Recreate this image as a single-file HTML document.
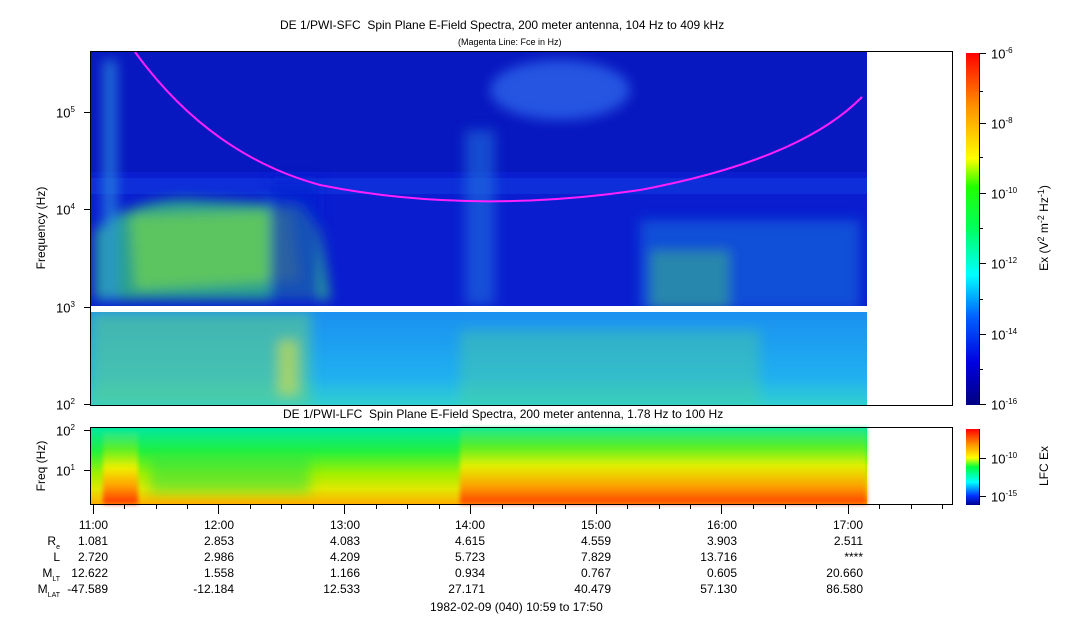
<!DOCTYPE html>
<html><head><meta charset="utf-8"><style>
body{margin:0;background:#fff;width:1083px;height:620px;overflow:hidden;position:relative;font-family:"Liberation Sans",sans-serif;color:#000}
.t{position:absolute;font-size:12px;white-space:nowrap;line-height:14px}
.c{position:absolute;font-size:12px;white-space:nowrap;line-height:16px;text-align:right}
.c div{height:16px}
sup{font-size:8px}
.s{font-size:7px;position:relative;top:4px}
</style></head><body>
<svg width="1083" height="620" style="position:absolute;left:0;top:0">
<defs>
<linearGradient id="cb" x1="0" y1="1" x2="0" y2="0">
<stop offset="0" stop-color="#000080"/><stop offset=".12" stop-color="#0000e0"/><stop offset=".25" stop-color="#0060ff"/><stop offset=".37" stop-color="#00ffff"/><stop offset=".5" stop-color="#00ff60"/><stop offset=".62" stop-color="#20ff00"/><stop offset=".7" stop-color="#ffff00"/><stop offset=".85" stop-color="#ff9000"/><stop offset="1" stop-color="#ff0000"/>
</linearGradient>
<linearGradient id="cb2" x1="0" y1="1" x2="0" y2="0">
<stop offset="0" stop-color="#000090"/><stop offset=".12" stop-color="#0030ff"/><stop offset=".3" stop-color="#00ffff"/><stop offset=".5" stop-color="#00ff40"/><stop offset=".62" stop-color="#ffff00"/><stop offset=".8" stop-color="#ff9000"/><stop offset="1" stop-color="#ff0000"/>
</linearGradient>
<linearGradient id="low" x1="0" y1="0" x2="0" y2="1">
<stop offset="0" stop-color="#00e8a0"/><stop offset=".3" stop-color="#20f040"/><stop offset=".6" stop-color="#a0f000"/><stop offset=".8" stop-color="#e0e800"/><stop offset="1" stop-color="#ffb000"/>
</linearGradient>
<linearGradient id="low2" x1="0" y1="0" x2="0" y2="1">
<stop offset="0" stop-color="#20e890"/><stop offset=".25" stop-color="#60f020"/><stop offset=".5" stop-color="#f0f000"/><stop offset=".75" stop-color="#ffa000"/><stop offset="1" stop-color="#ff3000"/>
</linearGradient>
<linearGradient id="band" x1="0" y1="0" x2="0" y2="1">
<stop offset="0" stop-color="#1a90f0"/><stop offset=".7" stop-color="#20b0f0"/><stop offset="1" stop-color="#30d0d0"/>
</linearGradient>
<filter id="bl" x="-20%" y="-20%" width="140%" height="140%"><feGaussianBlur stdDeviation="6"/></filter>
<filter id="bl2"><feGaussianBlur stdDeviation="2"/></filter>
<clipPath id="cp1"><rect x="91" y="52" width="776" height="254"/></clipPath>
<clipPath id="cp2"><rect x="91" y="312" width="776" height="93"/></clipPath>
</defs>
<rect x="91" y="52" width="776" height="254" fill="#0a1ed0"/>
<g clip-path="url(#cp1)">
<rect x="91" y="52" width="776" height="120" fill="#0818c0"/>
<ellipse cx="560" cy="90" rx="70" ry="30" fill="#3070f0" opacity=".7" filter="url(#bl)"/>
<rect x="91" y="178" width="776" height="16" fill="#1038e0" opacity=".6"/>
<g filter="url(#bl)">
<path d="M95 230 Q140 195 200 200 L300 205 L320 230 L330 300 L95 300Z" fill="#30c080" opacity=".8"/>
<path d="M130 215 L290 210 L300 280 L135 290Z" fill="#80e040" opacity=".6"/>
<rect x="103" y="60" width="14" height="240" fill="#2a90e0" opacity=".7"/>
<rect x="465" y="130" width="30" height="175" fill="#2080e0" opacity=".5"/>
<rect x="640" y="220" width="220" height="90" fill="#1a80e0" opacity=".5"/>
<rect x="650" y="250" width="80" height="60" fill="#40c080" opacity=".5"/>
<rect x="270" y="180" width="50" height="120" fill="#0a1ed0" opacity=".6"/>
</g>
</g>
<rect x="91" y="312" width="776" height="93" fill="url(#band)"/>
<g clip-path="url(#cp2)" filter="url(#bl)">
<rect x="91" y="312" width="220" height="93" fill="#60d080" opacity=".55"/>
<rect x="460" y="330" width="300" height="75" fill="#50d090" opacity=".4"/>
<rect x="278" y="340" width="20" height="55" fill="#e0e040" opacity=".6"/>
</g>
<path d="M135 52 Q210 155 320 185 Q470 215 640 190 Q800 160 862 97" fill="none" stroke="#ff20ff" stroke-width="2"/>
<rect x="90.5" y="51.5" width="862" height="354" fill="none" stroke="#000"/>
<rect x="91" y="428" width="776" height="76" fill="url(#low)"/>
<rect x="460" y="428" width="407" height="76" fill="url(#low2)" opacity=".9" filter="url(#bl2)"/>
<rect x="103" y="432" width="35" height="72" fill="url(#low2)" filter="url(#bl2)"/>
<rect x="150" y="455" width="160" height="38" fill="#20e050" opacity=".5" filter="url(#bl)"/>
<rect x="90.5" y="427.5" width="862" height="77" fill="none" stroke="#000"/>
<rect x="966" y="53" width="13" height="352" fill="url(#cb)"/>
<rect x="966" y="429" width="13" height="76" fill="url(#cb2)"/>
<g stroke="#000">
<line x1="979.5" y1="53" x2="979.5" y2="405"/>
<line x1="979" y1="53.5" x2="986" y2="53.5"/><line x1="979" y1="91.5" x2="983" y2="91.5"/>
<line x1="979" y1="123.5" x2="986" y2="123.5"/><line x1="979" y1="157.5" x2="983" y2="157.5"/>
<line x1="979" y1="193.5" x2="986" y2="193.5"/><line x1="979" y1="228.5" x2="983" y2="228.5"/>
<line x1="979" y1="263.5" x2="986" y2="263.5"/><line x1="979" y1="299.5" x2="983" y2="299.5"/>
<line x1="979" y1="334.5" x2="986" y2="334.5"/><line x1="979" y1="369.5" x2="983" y2="369.5"/>
<line x1="979" y1="404.5" x2="986" y2="404.5"/>
<line x1="979.5" y1="429" x2="979.5" y2="505"/>
<line x1="979" y1="458.5" x2="986" y2="458.5"/><line x1="979" y1="496.5" x2="986" y2="496.5"/>
<line x1="84" y1="112.5" x2="90" y2="112.5"/><line x1="84" y1="209.5" x2="90" y2="209.5"/>
<line x1="84" y1="307.5" x2="90" y2="307.5"/><line x1="84" y1="404.5" x2="90" y2="404.5"/>
<line x1="84" y1="430.5" x2="90" y2="430.5"/><line x1="84" y1="470.5" x2="90" y2="470.5"/>
<line x1="93.5" y1="505" x2="93.5" y2="514"/><line x1="218.5" y1="505" x2="218.5" y2="514"/>
<line x1="344.5" y1="505" x2="344.5" y2="514"/><line x1="470.5" y1="505" x2="470.5" y2="514"/>
<line x1="596.5" y1="505" x2="596.5" y2="514"/><line x1="721.5" y1="505" x2="721.5" y2="514"/>
<line x1="848.5" y1="505" x2="848.5" y2="514"/>
<line x1="124.5" y1="505" x2="124.5" y2="509"/><line x1="156.5" y1="505" x2="156.5" y2="509"/><line x1="187.5" y1="505" x2="187.5" y2="509"/>
<line x1="250.5" y1="505" x2="250.5" y2="509"/><line x1="281.5" y1="505" x2="281.5" y2="509"/><line x1="313.5" y1="505" x2="313.5" y2="509"/>
<line x1="376.5" y1="505" x2="376.5" y2="509"/><line x1="407.5" y1="505" x2="407.5" y2="509"/><line x1="439.5" y1="505" x2="439.5" y2="509"/>
<line x1="502.5" y1="505" x2="502.5" y2="509"/><line x1="533.5" y1="505" x2="533.5" y2="509"/><line x1="565.5" y1="505" x2="565.5" y2="509"/>
<line x1="627.5" y1="505" x2="627.5" y2="509"/><line x1="659.5" y1="505" x2="659.5" y2="509"/><line x1="690.5" y1="505" x2="690.5" y2="509"/>
<line x1="753.5" y1="505" x2="753.5" y2="509"/><line x1="785.5" y1="505" x2="785.5" y2="509"/><line x1="816.5" y1="505" x2="816.5" y2="509"/>
<line x1="879.5" y1="505" x2="879.5" y2="509"/><line x1="911.5" y1="505" x2="911.5" y2="509"/><line x1="942.5" y1="505" x2="942.5" y2="509"/>
</g>
<text x="45" y="228" font-size="12" font-family="Liberation Sans" transform="rotate(-90 45 228)" text-anchor="middle">Frequency (Hz)</text>
<text x="45" y="466" font-size="12" font-family="Liberation Sans" transform="rotate(-90 45 466)" text-anchor="middle">Freq (Hz)</text>
<text x="1048" y="228" font-size="12" font-family="Liberation Sans" transform="rotate(-90 1048 228)" text-anchor="middle">Ex (V<tspan dy="-4" font-size="9">2</tspan><tspan dy="4"> m</tspan><tspan dy="-4" font-size="9">-2</tspan><tspan dy="4"> Hz</tspan><tspan dy="-4" font-size="9">-1</tspan><tspan dy="4">)</tspan></text>
<text x="1048" y="466" font-size="12" font-family="Liberation Sans" transform="rotate(-90 1048 466)" text-anchor="middle">LFC Ex</text>
</svg>
<div class="t" style="left:280px;top:18px">DE 1/PWI-SFC&nbsp; Spin Plane E-Field Spectra, 200 meter antenna, 104 Hz to 409 kHz</div>
<div class="t" style="left:458px;top:35px;font-size:9px">(Magenta Line: Fce in Hz)</div>
<div class="t" style="left:283px;top:407px">DE 1/PWI-LFC&nbsp; Spin Plane E-Field Spectra, 200 meter antenna, 1.78 Hz to 100 Hz</div>
<div class="t" style="left:56px;top:103px;font-size:13px">10<sup>5</sup></div>
<div class="t" style="left:56px;top:200px;font-size:13px">10<sup>4</sup></div>
<div class="t" style="left:56px;top:298px;font-size:13px">10<sup>3</sup></div>
<div class="t" style="left:56px;top:395px;font-size:13px">10<sup>2</sup></div>
<div class="t" style="left:56px;top:421px;font-size:13px">10<sup>2</sup></div>
<div class="t" style="left:56px;top:461px;font-size:13px">10<sup>1</sup></div>
<div class="t" style="left:991px;top:44px;font-size:13px">10<sup>-6</sup></div>
<div class="t" style="left:991px;top:114px;font-size:13px">10<sup>-8</sup></div>
<div class="t" style="left:991px;top:184px;font-size:13px">10<sup>-10</sup></div>
<div class="t" style="left:991px;top:254px;font-size:13px">10<sup>-12</sup></div>
<div class="t" style="left:991px;top:325px;font-size:13px">10<sup>-14</sup></div>
<div class="t" style="left:991px;top:395px;font-size:13px">10<sup>-16</sup></div>
<div class="t" style="left:991px;top:449px;font-size:13px">10<sup>-10</sup></div>
<div class="t" style="left:991px;top:487px;font-size:13px">10<sup>-15</sup></div>
<div class="c" style="left:20px;width:40px;top:533px"><div>R<span class="s">e</span></div><div>L</div><div>M<span class="s">LT</span></div><div>M<span class="s">LAT</span></div></div>
<div class="c" style="left:20px;width:88px;top:517px"><div>11:00</div><div>1.081</div><div>2.720</div><div>12.622</div><div>-47.589</div></div>
<div class="c" style="left:150px;width:84px;top:517px"><div>12:00</div><div>2.853</div><div>2.986</div><div>1.558</div><div>-12.184</div></div>
<div class="c" style="left:276px;width:84px;top:517px"><div>13:00</div><div>4.083</div><div>4.209</div><div>1.166</div><div>12.533</div></div>
<div class="c" style="left:401px;width:84px;top:517px"><div>14:00</div><div>4.615</div><div>5.723</div><div>0.934</div><div>27.171</div></div>
<div class="c" style="left:527px;width:84px;top:517px"><div>15:00</div><div>4.559</div><div>7.829</div><div>0.767</div><div>40.479</div></div>
<div class="c" style="left:653px;width:84px;top:517px"><div>16:00</div><div>3.903</div><div>13.716</div><div>0.605</div><div>57.130</div></div>
<div class="c" style="left:779px;width:84px;top:517px"><div>17:00</div><div>2.511</div><div>****</div><div>20.660</div><div>86.580</div></div>
<div class="t" style="left:430px;top:600px">1982-02-09 (040) 10:59 to 17:50</div>
</body></html>
